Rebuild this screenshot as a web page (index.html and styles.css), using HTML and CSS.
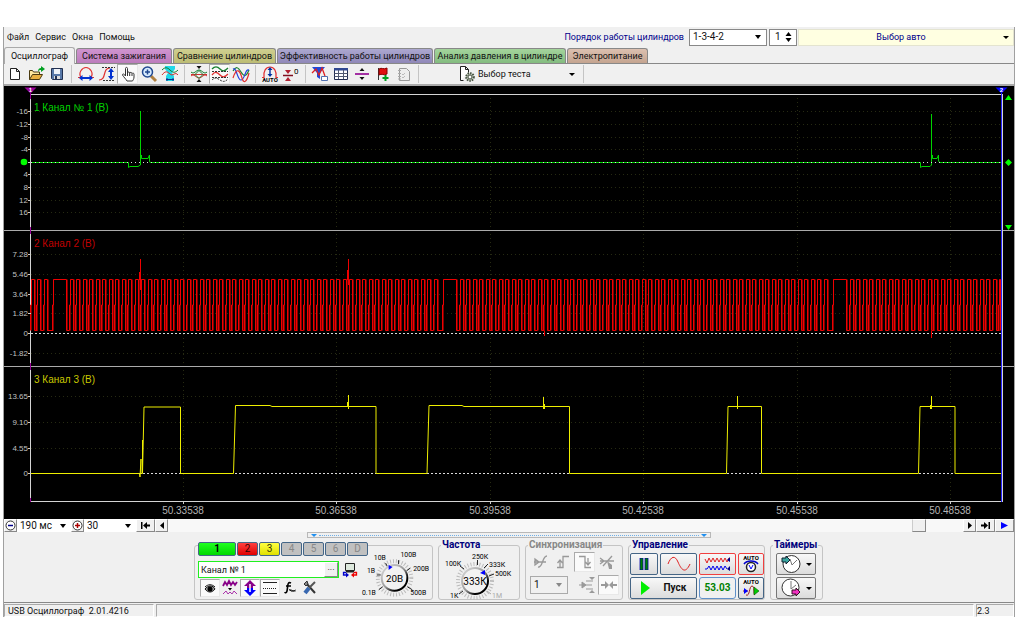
FILE: index.html
```html
<!DOCTYPE html>
<html lang="ru">
<head>
<meta charset="utf-8">
<title>USB Осциллограф</title>
<link rel="stylesheet" href="styles.css">
</head>
<body>
<div class="app">
  <header class="menubar">
    <nav class="menu">
      <button type="button">Файл</button><button type="button">Сервис</button><button type="button">Окна</button><button type="button">Помощь</button>
    </nav>
    <label class="order-label" for="order">Порядок работы цилиндров</label>
    <span class="combo order"><select id="order"><option>1-3-4-2</option></select></span>
    <span class="spin"><input type="text" value="1" aria-label="Цилиндр"><svg width="7" height="10" viewBox="0 0 7 10"><path d="M3.500 0 6.500 4h-6zM3.500 10 6.500 6h-6z" fill="#000"/></svg></span>
    <button type="button" class="car"><span>Выбор авто</span><i class="caret"></i></button>
  </header>

  <div class="tabs" role="tablist">
    <button type="button" role="tab" aria-selected="true" class="tab t-main">Осциллограф</button>
    <button type="button" role="tab" class="tab t-ignition">Система зажигания</button>
    <button type="button" role="tab" class="tab t-compare">Сравнение цилиндров</button>
    <button type="button" role="tab" class="tab t-effect">Эффективность работы цилиндров</button>
    <button type="button" role="tab" class="tab t-pressure">Анализ давления в цилиндре</button>
    <button type="button" role="tab" class="tab t-power">Электропитание</button>
  </div>

  <div class="toolbar">
    <button type="button" class="tool" aria-label="Новый"><svg viewBox="0 0 18 18"><path d="M4.500 3.500h6l3 3v8h-9zM10.500 3.500v3h3" fill="#fff" stroke="#222"/></svg></button>
    <button type="button" class="tool" aria-label="Открыть"><svg viewBox="0 0 18 18"><path d="M2.500 14.500v-9h3l1 1.500h6v3" fill="#ffe9a0" stroke="#4a3a10"/><path d="M2.500 14.500l3-5h10l-3 5z" fill="#e8b040" stroke="#4a3a10"/><path d="M11 7c0-3 1-4 3-4V1l4 3-4 3V5c-1 0-2 0-3 2z" fill="#00a020"/></svg></button>
    <button type="button" class="tool" aria-label="Сохранить"><svg viewBox="0 0 18 18"><path d="M3.500 3.500h11v11h-10l-1-1z" fill="#5878a8" stroke="#223050"/><path d="M6 4h6v5H6z" fill="#eef2f8"/><path d="M6 11h6v3H6z" fill="#ddd"/><path d="M7 11h2v3H7z" fill="#223050"/></svg></button>
    <i class="sep"></i>
    <button type="button" class="tool" aria-label="Растянуть по горизонтали"><svg viewBox="0 0 18 18"><path d="M1 12.500h3C1 8 5 2.500 9 2.500s8 5.500 5 10h3" fill="none" stroke="#e03030" stroke-width="1.200"/><path d="M2 13l3.500-3v2h7v-2L16 13l-3.500 3v-2h-7v2z" fill="#0030d0"/></svg></button>
    <button type="button" class="tool" aria-label="Растянуть по вертикали"><svg viewBox="0 0 18 18"><path d="M1 15c8 0 3-12 11-12" fill="none" stroke="#e03030" stroke-width="1.200"/><path d="M4 2.500h13M5 15.500h12" stroke="#333" stroke-dasharray="2 1"/><path d="M13 3l3 4h-2v4h2l-3 4-3-4h2V7h-2z" fill="#0030d0"/></svg></button>
    <button type="button" class="tool pressed" aria-label="Перемещение"><svg viewBox="0 0 18 18"><path d="M6.500 11V3.500c0-1.500 2-1.500 2 0V8c0-1.500 2.200-1.200 2.200 0 .3-1 2.300-.8 2.300.6.4-1 2-.6 2 .6V12c0 2-1 3-1.500 4H8c-1-2-3-3.500-4.500-6 0-1.500 1.500-1.500 3 1z" fill="#fff" stroke="#333"/><path d="M8.500 8v3M10.700 8v3M13 9v2" stroke="#333"/></svg></button>
    <button type="button" class="tool" aria-label="Лупа"><svg viewBox="0 0 18 18"><path d="M11 11l5 5" stroke="#b08040" stroke-width="3"/><circle cx="7.500" cy="7" r="5" fill="#d8ecff" stroke="#204890" stroke-width="1.500"/><path d="M5 7h5M7.500 4.500v5" stroke="#204890" stroke-width="1.500"/></svg></button>
    <button type="button" class="tool" aria-label="Фрагмент"><svg viewBox="0 0 18 18"><path d="M4 1h10v3l-3 4 2 3v5H5v-5l2-3-3-4z" fill="#20d8e8"/><path d="M1 5c3-3 5-3 8 0s5 3 8 0" fill="none" stroke="#188030"/><path d="M1 10c3-4 5-4 8-1s5-3 8 1" fill="none" stroke="#d03030"/><path d="M5 14.500h8M6 13v3M12 13v3" stroke="#103090"/></svg></button>
    <i class="sep"></i>
    <button type="button" class="tool" aria-label="Сжать лучи"><svg viewBox="0 0 18 18"><path d="M1 7c3 3 5-2 8-2s5 5 8 2" fill="none" stroke="#188030"/><path d="M1 11c3-3 5 2 8 2s5-5 8-2M1 9.500h16" fill="none" stroke="#d03030"/><path d="M9 4L6.500 1h5zM9 14l-2.500 3h5z" fill="#111"/><path d="M5 9.500l4-4 4 4-4 4z" fill="none" stroke="#188030"/></svg></button>
    <button type="button" class="tool pressed" aria-label="Лучи раздельно"><svg viewBox="0 0 18 18"><path d="M1 4c3-3 5-3 8 0s5 2 8-1" fill="none" stroke="#188030" stroke-width="1.300"/><path d="M1 10c3-4 5-3 8 0s5 2 8-1" fill="none" stroke="#e03030" stroke-width="1.300"/><path d="M1 15c3-3 5-2 8 0s5 2 8-1M1 6.500h16M1 12.500h16" fill="none" stroke="#333" stroke-dasharray="2 1"/></svg></button>
    <button type="button" class="tool" aria-label="Лучи совместно"><svg viewBox="0 0 18 18"><path d="M1 6c3-5 5-4 8 1s5 5 8-2" fill="none" stroke="#188030" stroke-width="1.200"/><path d="M1 4c4-2 4 11 8 11s4-12 8-10" fill="none" stroke="#2040e0" stroke-width="1.200"/><path d="M1 13c4-12 7-7 9 0s5 3 7-5" fill="none" stroke="#e03030" stroke-width="1.200"/></svg></button>
    <i class="sep"></i>
    <button type="button" class="tool" aria-label="Автомасштаб"><svg viewBox="0 0 18 18"><path d="M1 12.500h2C2 6 5 2 9 2s7 4 6 10.500h2" fill="none" stroke="#e03030" stroke-width="1.200"/><path d="M9 2l2.500 3H9.700v4h1.800L9 12 6.500 9h1.800V5H6.500z" fill="#0030a0"/><text x="9" y="17" text-anchor="middle" class="auto">AUTO</text></svg></button>
    <button type="button" class="tool" aria-label="Ноль"><svg viewBox="0 0 18 18"><path d="M1 10.500h10" stroke="#801020" stroke-width="1.500"/><path d="M6 9L3 5h6zM6 12l-3 4h6z" fill="#b02030"/><text x="12" y="9" class="zero">0</text></svg></button>
    <i class="sep"></i>
    <button type="button" class="tool" aria-label="Фильтр"><svg viewBox="0 0 18 18"><path d="M1 2h13L9 8v6l-3-2V8z" fill="#2048d8"/><path d="M1 8l4-4 3 6 3-7 3 8" fill="none" stroke="#e02020" stroke-width="1.300"/><path d="M10.500 11.500h6v4h-6z" fill="#fff" stroke="#5070b0"/></svg></button>
    <button type="button" class="tool" aria-label="Таблица"><svg viewBox="0 0 18 18"><path d="M2.500 3.500h13v11h-13z" fill="#fff" stroke="#222c50"/><path d="M2 3h14v2.500H2z" fill="#304890"/><path d="M2.500 8.500h13M2.500 11.500h13M6.500 5v9M11.500 5v9" stroke="#505870"/></svg></button>
    <button type="button" class="tool" aria-label="Линейка"><svg viewBox="0 0 18 18"><path d="M2 9h14" stroke="#900090" stroke-width="1.600"/><path d="M9 3l2.500 3h-5zM9 15l2.500-3h-5z" fill="#111"/></svg></button>
    <button type="button" class="tool" aria-label="Добавить метку"><svg viewBox="0 0 18 18"><path d="M4.500 3v12" stroke="#333"/><path d="M5 4c3-2 4 1 8-1v6c-4 2-5-1-8 1z" fill="#e01010" stroke="#800"/><path d="M11.500 10v6M8.500 13h6" stroke="#00a020" stroke-width="2"/></svg></button>
    <button type="button" class="tool" aria-label="Отчёт"><svg viewBox="0 0 18 18"><path d="M4.500 3.500h7l3 3v9h-10z" fill="#eee" stroke="#999"/><path d="M3 5.500h3M3 8.500h3M3 11.500h3M3 14h3" stroke="#aaa"/><path d="M7 9l1 1 2-2M7 12l1 1 2-2" fill="none" stroke="#bbb"/></svg></button>
    <i class="sep"></i>
    <button type="button" class="test-select"><svg width="18" height="18" viewBox="0 0 18 18"><path d="M3.500 15.500v-14h5l3 3v3M8.500 1.500v3h3M3.500 15.500h3" fill="#fff" stroke="#222"/><circle cx="13" cy="12" r="3.800" fill="#c8d0c0" stroke="#445040" stroke-width="2" stroke-dasharray="1.500 1"/><circle cx="13" cy="12" r="2" fill="#fff" stroke="#445040"/></svg><span>Выбор теста</span><i class="caret"></i></button>
    <i class="sep"></i>
  </div>

  <main class="scope">
    <svg id="chart" class="chart" viewBox="4 86 1010 433" role="img" aria-label="Осциллограммы">
      <g id="grid" class="grid"></g>
      <g class="frame">
        <path d="M30 94.500H1002M30 501.500H1002"/>
        <path class="divider" d="M4 230.500H1014M4 366.500H1014"/>
        <path d="M30.500 94V227M30.500 234V363M30.500 370V498M1002.500 94V502"/>
      </g>
      <path class="cursor-a" d="M30.500 87V99M30.500 227V234M30.500 363V370M30.500 498V502"/>
      <g id="zeros" class="zeros"></g>
      <g id="crank"></g>
      <path class="red" d="M140.500 259V290M139.500 272V280M348.500 259V285M347.500 270V280M931.500 331V338M544.500 331V336"/>
      <path class="yellow" d="M31 473.500H139.500L140 477 141 459V473.500H142.500L144 407H180.500V473.500H233.500L235.500 405.500H270L272 406.500H376V473.500H427L429 405.500H462L464 406.500H569.500V473.500H726.500L728 406.500H761.500V473.500H918.500L920 406.500H955V473.500H1001"/>
      <path class="yellow" d="M348.500 395V409M347.500 402V407M543.500 397V409M544.500 404V409M737.500 396V409M931.500 396V409M930.500 405V409M142.500 440V473"/>
      <path class="green" d="M31 162.500H128.500V167.500L130 166.500H138L140.500 165V111M140.500 136V158M141.500 155V158.500H148L149.500 155V161L150 162.500H920.500V167.500L922 166.500H930L931.500 165V114M931.500 136V158M932.500 155V158.500H937L938.500 155V161L940 162.500H1001"/>
      <path class="white-dash" d="M31 162.500H1001"/>
      <path class="cursor-b" d="M1001.500 92V502"/>
      <path d="M24.500 87.500h12l-6 6z" fill="#909"/>
      <path d="M995.500 87.500h12l-6 6z" fill="#00f"/>
      <text class="flag" x="30.500" y="92">1</text>
      <text class="flag" x="1001.500" y="92">2</text>
      <circle cx="24" cy="162" r="3.300" fill="#0f0"/>
      <path d="M1008.500 95l3.500 5h-7zM1008.500 159l3.500 3.500-3.500 3.500-3.500-3.500zM1005 225h7l-3.500 5z" fill="#0f0"/>
      <text class="name n1" x="34" y="111">1 Канал № 1 (В)</text>
      <text class="name n2" x="34" y="247">2 Канал 2 (В)</text>
      <text class="name n3" x="34" y="383">3 Канал 3 (В)</text>
      <g id="scales"></g>
    </svg>
  </main>

  <div class="timebar">
    <button type="button" class="flat" aria-label="Уменьшить"><svg width="11" height="11" viewBox="0 0 11 11"><circle cx="5.500" cy="5.500" r="4.500" fill="#fff" stroke="#333"/><path d="M3 5.500h5" stroke="#008" stroke-width="1.500"/></svg></button>
    <span class="combo time"><select aria-label="Развёртка"><option>190 мс</option></select></span>
    <button type="button" class="flat" aria-label="Увеличить"><svg width="11" height="11" viewBox="0 0 11 11"><circle cx="5.500" cy="5.500" r="4.500" fill="#fff" stroke="#333"/><path d="M3 5.500h5M5.500 3v5" stroke="#a00" stroke-width="1.500"/></svg></button>
    <span class="combo count"><select aria-label="Масштаб"><option>30</option></select></span>
    <button type="button" class="flat wide" aria-label="В начало"><svg width="9" height="7" viewBox="0 0 9 7"><path d="M0 0h1.500v7H0zM6 0v7L2 3.500zM6 2.500h3v2H6z"/></svg></button>
    <button type="button" class="flat" aria-label="Назад"><svg width="4" height="7" viewBox="0 0 4 7"><path d="M4 0v7L0 3.500z"/></svg></button>
    <div class="track"><i class="thumb"></i></div>
    <button type="button" class="flat" aria-label="Вперёд"><svg width="4" height="7" viewBox="0 0 4 7"><path d="M0 0v7l4-3.500z"/></svg></button>
    <button type="button" class="flat wide" aria-label="В конец"><svg width="9" height="7" viewBox="0 0 9 7"><path d="M7.500 0H9v7H7.500zM3 0v7l4-3.500zM0 2.500h3v2H0z"/></svg></button>
    <button type="button" class="flat wide" aria-label="Воспроизвести"><svg width="7" height="7" viewBox="0 0 7 7"><path d="M0 0v7l7-3.500z" fill="#00f"/></svg></button>
  </div>

  <div class="splitter"><i></i><span></span><i></i></div>

  <section class="controls">
    <fieldset class="box channel">
      <div class="channel-side">
        <div class="channel-tabs">
          <button type="button" class="ch c1">1</button><button type="button" class="ch c2">2</button><button type="button" class="ch c3">3</button><button type="button" class="ch" disabled>4</button><button type="button" class="ch" disabled>5</button><button type="button" class="ch" disabled>6</button><button type="button" class="ch" disabled>D</button>
        </div>
        <div class="channel-name">
          <span class="name-field"><input type="text" value="Канал № 1" aria-label="Имя канала"><button type="button" aria-label="Выбрать">···</button></span>
          <svg width="16" height="16" viewBox="0 0 16 16"><path d="M3.500 1.500h9v7h-9z" fill="#dde8dd" stroke="#222"/><path d="M4 9h8v1.500H4z" fill="#222"/><path d="M4 10.500H1.500V13H4" fill="none" stroke="#00c" stroke-width="1.300"/><path d="M4 10.500v5L7 13z" fill="#00c"/><path d="M12 10.500h2.500V13H12" fill="none" stroke="#e00" stroke-width="1.300"/><path d="M12 10.500v5L9 13z" fill="#e00"/></svg>
        </div>
        <div class="channel-tools">
          <button type="button" class="tool pressed" aria-label="Видимость"><svg viewBox="0 0 18 18"><path d="M4 10c3-4 8-4 10 0-3 4-7 4-10 0z" fill="#999" stroke="#111"/><circle cx="9" cy="10" r="2.500" fill="#000"/><path d="M4 8c3-3 7-3 10 0" fill="none" stroke="#111"/></svg></button>
          <button type="button" class="tool" aria-label="Фильтр канала"><svg viewBox="0 0 18 18"><path d="M2 7l2-4 2 3 2-4 2 4 2-3 2 3 2-3" fill="none" stroke="#808" stroke-width="1.800"/><path d="M7 9h4l-2 2.500z"/><path d="M2 15l3-3 2 3 2-2 2 2 2-3 3 3" fill="none" stroke="#a3a"/></svg></button>
          <button type="button" class="tool pressed" aria-label="Инверсия"><svg viewBox="0 0 18 18"><path d="M9 1l6 6h-3v3H6V7H3z" fill="#808"/><path d="M9 17l6-6h-3V9H6v2H3z" fill="#00f"/><path d="M9 5v8" stroke="#fff" stroke-width="1.500"/></svg></button>
          <button type="button" class="tool pressed" aria-label="Уровни"><svg viewBox="0 0 18 18"><path d="M2 3.500h14M2 14.500h14" stroke="#222"/><path d="M2 9.500h14" stroke="#222" stroke-dasharray="1 1"/></svg></button>
          <button type="button" class="tool" aria-label="Функция"><svg viewBox="0 0 18 18"><path d="M10 4c-4-2-3 4-4 8-.5 2-2 2-2 1M5 7h5" fill="none" stroke="#000" stroke-width="1.600"/><path d="M8.500 12c2-3 3 2 6-1M8.500 10c2 4 3 1 6 2" fill="none" stroke="#000"/></svg></button>
          <button type="button" class="tool" aria-label="Настройки"><svg viewBox="0 0 18 18"><path d="M5 4l9 10" stroke="#333" stroke-width="2"/><path d="M3 5l3-3 1 3-2 2z" fill="#888" stroke="#333"/><path d="M14 3L8 9" stroke="#555" stroke-width="2"/><path d="M8 9l-4 5" stroke="#3868b0" stroke-width="4"/></svg></button>
        </div>
      </div>
      <svg class="knob" width="72" height="54" viewBox="360 548 72 54" role="img" aria-label="Предел 20В">
        <defs><linearGradient id="dial" x1="0" y1="0" x2="1" y2="1"><stop offset="0" stop-color="#ddd"/><stop offset=".5" stop-color="#999"/><stop offset=".75" stop-color="#000"/></linearGradient></defs>
        <circle cx="394" cy="580" r="17" class="ticks"/>
        <path class="lead" d="M378 592l4-3M376 577h4M385 565l2 4M398 562v4M410 570l-4 3M412 592l-5-3"/>
        <circle cx="394" cy="580" r="13" fill="#f2f2f2" stroke="url(#dial)" stroke-width="2"/>
        <path d="M388 567l4 2-4 3z" fill="#00f"/>
        <g class="tiny"><text x="361" y="597">0.1В</text><text x="366" y="575">1В</text><text x="373" y="562">10В</text><text x="400" y="559">100В</text><text x="413" y="573">200В</text><text x="410" y="597">500В</text></g>
        <text x="394" y="584" class="dial-value">20В</text>
      </svg>
    </fieldset>

    <fieldset class="box freq"><legend>Частота</legend>
      <svg class="knob" width="76" height="52" viewBox="440 550 76 52" role="img" aria-label="Частота 333К">
        <circle cx="476" cy="580" r="17" class="ticks"/>
        <path class="lead" d="M460 593l4-3M461 565l4 3M478.500 559v5M489 563l-4 4M495 573l-5 2"/><path d="M492 593l-4-3" stroke="#aaa"/>
        <circle cx="476" cy="580" r="13" fill="#f2f2f2" stroke="url(#dial)" stroke-width="2"/>
        <path d="M481 572l5-3v5z" fill="#00f"/>
        <g class="tiny"><text x="451" y="597">1К</text><text x="446" y="565">100К</text><text x="473" y="558">250К</text><text x="490" y="566">333К</text><text x="496" y="575">500К</text><text x="493" y="597" fill="#aaa">1М</text></g>
        <text x="476" y="584" class="dial-value">333К</text>
      </svg>
    </fieldset>

    <fieldset class="box sync" disabled><legend>Синхронизация</legend>
      <div class="row">
        <button type="button" class="tool" aria-label="Уровень"><svg viewBox="0 0 18 18"><path d="M2 9h12M3 6l4 3-4 3zM6 14c5 1 4-11 9-11" fill="none" stroke="#999" stroke-width="1.300"/></svg></button>
        <button type="button" class="tool" aria-label="Фронт"><svg viewBox="0 0 18 18"><path d="M3 14.500h6v-11h6M6 14V8M3.500 10L6 7l2.500 3" fill="none" stroke="#999" stroke-width="1.300"/></svg></button>
        <button type="button" class="tool pressed" aria-label="Спад"><svg viewBox="0 0 18 18"><path d="M3 3.500h6v11h6M12 5v6M9.500 9l2.500 3 2.500-3" fill="none" stroke="#999" stroke-width="1.300"/></svg></button>
        <button type="button" class="tool" aria-label="Импульс"><svg viewBox="0 0 18 18"><path d="M2 8h14M2 5l4 3-4 3M5 13L14 3" fill="none" stroke="#999" stroke-width="1.300"/><path d="M9 8l5 4v4h-3z" fill="#999"/></svg></button>
      </div>
      <div class="row">
        <span class="combo sync-ch"><select aria-label="Канал синхронизации"><option>1</option></select></span>
        <button type="button" class="tool" aria-label="Порог"><svg viewBox="0 0 18 18"><path d="M1 9h6M4 6l4 3-4 3zM8 5h7M8 13h7M8 9h6" stroke="#999" fill="#999"/><path d="M11 1h6l-3 3zM11 17h6l-3-3z" fill="#999"/></svg></button>
        <button type="button" class="tool pressed" aria-label="Сжать"><svg viewBox="0 0 18 18"><path d="M1 9h6M11 9h6" stroke="#999" stroke-width="2"/><path d="M5 5l4 4-4 4zM13 5L9 9l4 4z" fill="#999"/></svg></button>
      </div>
    </fieldset>

    <fieldset class="box run"><legend>Управление</legend>
      <div class="run-grid">
        <div class="pair">
          <button type="button" class="big pause" aria-label="Пауза"><svg width="10" height="12" viewBox="0 0 10 12"><path d="M1 0h3v12H1zM6 0h3v12H6z" fill="#008000" stroke="#00a" stroke-width=".8"/></svg></button>
          <button type="button" class="big sine" aria-label="Синус"><svg width="24" height="16" viewBox="0 0 24 16"><path d="M1 8C4 0 8-1 11 6s7 13 12 2" fill="none" stroke="#e02020"/></svg></button>
        </div>
        <button type="button" class="big hot" aria-label="Два луча"><svg width="28" height="18" viewBox="0 0 28 18"><path d="M1 4l2 4 2-5 2 4 2-4 2 4 2-4 2 4 2-4 2 4 2-4 2 4 2-4" fill="none" stroke="#e02020"/><path d="M1 14h2l2-3 2 4 2-4 2 4 2-4 2 4 2-4 2 4 2-4 2 3" fill="none" stroke="#00e"/><path d="M23 5l3-3v5zM23 14l3-3v5z" fill="#008"/></svg></button>
        <button type="button" class="big hot" aria-label="Автодиапазон"><svg width="20" height="20" viewBox="0 0 20 20"><text x="10" y="6" text-anchor="middle" class="auto">AUTO</text><path d="M3 10c3-4 11-4 14 0" fill="none" stroke="#00c" stroke-width="1.500"/><circle cx="10" cy="13" r="4.500" fill="#fff" stroke="#222" stroke-width="1.500"/><path d="M8 11l2 4 2-4" fill="none" stroke="#00f"/></svg></button>
        <button type="button" class="big start"><svg width="9" height="14" viewBox="0 0 9 14"><path d="M0 0v14l9-7z" fill="#0e0"/></svg><span>Пуск</span></button>
        <output class="big rate">53.03</output>
        <button type="button" class="big" aria-label="Автозапуск"><svg width="20" height="20" viewBox="0 0 20 20"><text x="10" y="6" text-anchor="middle" class="auto">AUTO</text><path d="M2 13h5M5 17c4 2 3-9 6-9s1 8 3 9" fill="none" stroke="#a02020"/><path d="M3 10v6l4-3z" fill="#00f"/><path d="M13 9v8l5-4z" fill="#0c0" stroke="#050" stroke-width=".6"/></svg></button>
      </div>
    </fieldset>

    <fieldset class="box timers"><legend>Таймеры</legend>
      <button type="button" class="big gray" aria-label="Таймер начала"><svg width="20" height="20" viewBox="0 0 20 20"><circle cx="10.500" cy="10" r="8.500" fill="#fff" stroke="#333"/><path d="M9 5l2 6 5-5" fill="none" stroke="#777"/><path d="M1 4h4V2l4 4-4 4V8H1z" fill="#3aa6a0" stroke="#123"/></svg><i class="caret"></i></button>
      <button type="button" class="big gray" aria-label="Таймер конца"><svg width="20" height="20" viewBox="0 0 20 20"><circle cx="9.500" cy="9.500" r="8.500" fill="#fff" stroke="#333"/><path d="M10 3v8l5-4" fill="none" stroke="#777"/><path d="M11 12h4v-2l4 4-4 4v-2h-4z" fill="#f030c0" stroke="#312"/></svg><i class="caret"></i></button>
    </fieldset>
  </section>

  <footer class="status"><span class="product">USB Осциллограф&nbsp; 2.01.4216</span><span class="message"></span><span class="version">2.3</span></footer>
</div>
<script src="chart.js"></script>
</body>
</html>
```
FILE: styles.css
```css
* { box-sizing: border-box; }
body { margin: 0; padding: 27px 9px 0 3px; background: #fff; font: 9px/12px Roboto, "Liberation Sans", Arial, sans-serif; color: #111; }
button, input, select, output { font: inherit; color: inherit; margin: 0; padding: 0; border: 0; background: none; border-radius: 0; }
select { appearance: none; width: 100%; height: 100%; padding-left: 3px; opacity: 1; }
.app { background: #f0f0f0; border-left: 1px solid #a0a0a0; border-right: 1px solid #a0a0a0; }

.menubar { display: flex; align-items: center; height: 20px; }
.menu { display: flex; gap: 6px; flex: 1; padding-left: 3px; }
.order-label { color: #00008b; margin-right: 5px; }
.combo { position: relative; background: #fff; }
.combo::after { content: ""; position: absolute; right: 5px; top: 50%; margin-top: -2px; border: 3px solid transparent; border-top: 4px solid #000; border-bottom: 0; pointer-events: none; }
.order { width: 78px; height: 17px; border: 1px solid #888; font-size: 10px; }
.spin { display: flex; align-items: center; width: 28px; height: 17px; margin: 0 1px 0 2px; padding-right: 4px; border: 1px solid #888; background: #fff; font-size: 10px; }
.spin input { flex: 1; min-width: 0; padding-left: 5px; }
.car { display: flex; align-items: center; width: 216px; height: 17px; padding-right: 4px; background: #ffffe1; color: #00008b; border: 1px solid #e4e4d0; }
.car span { flex: 1; }
.caret { border: 3px solid transparent; border-top: 3px solid #000; border-bottom: 0; }

.tabs { display: flex; align-items: flex-end; gap: 1px; height: 17px; border-bottom: 1px solid #888; }
.tab { height: 15px; border: 1px solid #888; border-bottom: 0; border-radius: 3px 3px 0 0; white-space: nowrap; }
.t-main { height: 17px; width: 71px; background: #f0f0f0; border-color: #aaa; margin-bottom: -1px; }
.t-ignition { width: 96px; background: linear-gradient(#d094d0, #bc7cbc); }
.t-compare { width: 103px; background: linear-gradient(#cfcf90, #bcbc74); }
.t-effect { width: 156px; background: linear-gradient(#aca8d0, #9088b8); }
.t-pressure { width: 132px; background: linear-gradient(#a4d49c, #84bc80); }
.t-power { width: 81px; background: linear-gradient(#dcc0b0, #c4a490); }

.toolbar { display: flex; align-items: center; height: 22px; border-bottom: 2px solid #aaa; }
.tool { display: flex; align-items: center; justify-content: center; width: 21px; height: 20px; border: 1px solid transparent; }
.tool svg { flex: none; width: 18px; height: 18px; }
.pressed { background: #fafafa; border-color: #aaa #e8e8e8 #e8e8e8 #aaa; }
.sep { width: 8px; height: 18px; background: linear-gradient(#c4c4c4, #c4c4c4) center / 1px 100% no-repeat; }
.test-select { display: flex; align-items: center; width: 157px; padding: 0 4px 0 35px; text-align: left; }
.test-select span { flex: 1; padding-left: 3px; }

.scope { background: #000; }
.chart { display: block; width: 100%; height: auto; font-family: "Liberation Sans", Arial, sans-serif; }
.grid { stroke: #262a12; stroke-dasharray: 1 3; }
.frame { stroke: #d4d4d4; fill: none; }
.divider { stroke: #aaa; }
.cursor-a { stroke: #909; }
.cursor-b { stroke: #22f; }
.zeros, .white-dash { stroke: #ddd; stroke-dasharray: 2 2; }
.white-dash { stroke-dasharray: 1 3; }
.red { stroke: #f00000; fill: none; }
.fall { stroke: #800000; fill: none; }
.yellow { stroke: #ee0; fill: none; }
.green { stroke: #00d400; fill: none; }
.name { font-size: 10px; }
.n1 { fill: #00d400; }
.n2 { fill: #c00000; }
.n3 { fill: #c8c800; }
.flag { font-size: 6px; font-weight: bold; fill: #fff; text-anchor: middle; }
.y-label { font-size: 8px; fill: #c0c0c0; text-anchor: end; }
.x-label { font-size: 10px; fill: #b4b4b4; text-anchor: middle; }

.timebar { display: flex; height: 13px; background: #fff; font-size: 10px; }
.flat { display: flex; align-items: center; justify-content: center; width: 13px; height: 13px; background: #f0f0f0; border: 1px solid; border-color: #fff #888 #888 #fff; }
.flat svg { flex: none; }
.wide { width: 19px; }
.time { width: 54px; }
.count { width: 52px; }
.track { flex: 1; display: flex; justify-content: flex-end; padding-right: 37px; background: #f8f8f8; }
.thumb { width: 14px; background: #f0f0f0; border: 1px solid; border-color: #fff #888 #888 #ccc; }
.splitter { display: flex; align-items: center; width: 404px; height: 6px; margin-left: 303px; padding: 0 3px; gap: 2px; border: 1px solid #b8b8b8; }
.splitter i { border: 3px solid transparent; border-top-color: #2090f0; border-bottom: 0; }
.splitter span { flex: 1; border-top: 1px dotted #70b0e8; }

.controls { display: flex; align-items: stretch; gap: 5px; height: 65px; padding: 1px 0 2px 190px; border-bottom: 1px solid #888; }
.box { min-width: 0; margin: 0; padding: 0; border: 1px solid #c4c4c4; border-radius: 3px; }
.box legend { height: 12px; margin-left: 2px; padding: 0 1px; font-weight: bold; font-size: 10px; line-height: 12px; color: #00007c; }
.channel { display: flex; width: 239px; margin-top: 6px; }
.channel-side { display: flex; flex-direction: column; width: 166px; padding-left: 3px; margin-top: -4px; }
.channel-tabs { display: flex; gap: 1px; background: #f0f0f0; }
.ch { flex: 0 0 21px; height: 14px; border: 1px solid #446688; border-radius: 2px; background: #c0c0c0; font-size: 10px; }
.ch:disabled { color: #888; }
.c1 { flex-basis: 38px; background: linear-gradient(#20ff20, #00d800); color: #000; font-weight: bold; }
.c2 { background: linear-gradient(#ff4040, #e00000); color: #300; }
.c3 { background: linear-gradient(#ffff40, #e0e000); color: #330; }
.channel-name { display: flex; align-items: center; gap: 3px; margin-top: 5px; }
.name-field { display: flex; flex: 0 0 141px; height: 17px; border: 1px solid #20f020; background: #fff; }
.name-field input { flex: 1; min-width: 0; padding-left: 2px; }
.name-field button { width: 14px; background: #f0f0f0; border: 1px solid; border-color: #fff #888 #888 #fff; line-height: 10px; }
.channel-tools { display: flex; margin-top: 1px; padding-left: 2px; }
.channel-tools .tool { width: 20px; height: 18px; }
.knob { display: block; }
.ticks { fill: none; stroke: #bbb; stroke-width: 4; stroke-dasharray: 1 2; }
.lead { stroke: #222; }
.tiny { font-size: 7px; }
.auto { font-weight: bold; font-size: 6px; }
.zero { font-size: 8px; }
.dial-value { font-size: 10px; text-anchor: middle; }

.freq { width: 82px; }
.sync { width: 98px; }
.box.sync legend { color: #888; }
.row { display: flex; align-items: center; gap: 1px; height: 21px; padding-left: 4px; }
.row + .row { margin-top: 2px; }
.sync-ch { width: 38px; height: 18px; margin-right: 7px; border: 1px solid #aaa; background: #f0f0f0; font-size: 10px; }
.sync-ch::after { border-top-color: #888; }
.row .tool { height: 20px; }

.run { width: 137px; }
.run-grid { display: grid; grid-template-columns: 67px 37px 26px; gap: 2px; padding: 2px 1px 0; }
.pair { display: flex; gap: 2px; }
.big { display: flex; align-items: center; justify-content: center; height: 22px; border: 1px solid #456585; border-radius: 2px; background: linear-gradient(#f8f8f8, #dcdcdc); }
.pause { flex: 0 0 28px; }
.sine { flex: 1; }
.hot { border-color: #f04040; }
.start { gap: 14px; font-size: 10px; font-weight: bold; }
.rate { border-color: #6090c8; border-radius: 3px; background: #f0f0f0; color: #008000; font-size: 10px; font-weight: bold; }
.timers { width: 53px; }
.gray { width: 40px; margin: 2px 0 0 5px; gap: 5px; border-color: #777; }

.status { display: flex; gap: 2px; height: 14px; padding-top: 1px; }
.status span { border: 1px solid; border-color: #aaa #fff #fff #aaa; line-height: 12px; }
.product { width: 150px; padding-left: 3px; white-space: nowrap; }
.message { flex: 1; }
.version { width: 38px; }
```
FILE: chart.js
```javascript
const NS = "http://www.w3.org/2000/svg";
const add = (parent, tag, attrs, text) => {
  const el = document.createElementNS(NS, tag);
  for (const key in attrs) el.setAttribute(key, attrs[key]);
  if (text) el.textContent = text;
  document.getElementById(parent).appendChild(el);
};

const yScale = [
  [111, "-16"], [124, "-12"], [137, "-8"], [149, "-4"], [162, ""], [174, "4"], [187, "8"], [200, "12"], [212, "16"],
  [254, "7.28"], [274, "5.46"], [294, "3.64"], [313, "1.82"], [333, "0"], [353, "-1.82"],
  [396, "13.65"], [422, "9.10"], [448, "4.55"], [473, "0"]
];
const xScale = [[183, "50.33538"], [336, "50.36538"], [490, "50.39538"], [643, "50.42538"], [797, "50.45538"], [950, "50.48538"]];

for (const [y, label] of yScale) {
  add("grid", "path", { d: `M31 ${y}.5H1001` });
  add("scales", "path", { d: `M28 ${y}.5H31`, stroke: "#ccc" });
  if (label) add("scales", "text", { x: 28, y: y + 3, class: "y-label" }, label);
}
for (const [x, label] of xScale) {
  add("grid", "path", { d: `M${x}.5 98V500` });
  add("scales", "path", { d: `M${x}.5 502V504`, stroke: "#ccc" });
  add("scales", "text", { x, y: 514, class: "x-label" }, label);
}
add("zeros", "path", { d: "M31 333.5H1001M31 473.5H1001" });

// Crankshaft sensor: 60-2 toothed wheel, one long tooth per revolution.
const HIGH = 279.5, LOW = 330.5, PERIOD = 6.5;
let bright = "", dark = "";
const pulse = (start, end) => {
  const a = Math.max(Math.floor(start), 31) + 0.5;
  const b = Math.min(Math.floor(end), 1000) + 0.5;
  if (b <= a) return;
  bright += `M${a - 1} ${LOW}V305H${a}V${HIGH}H${b}V${LOW}`;
  dark += `M${a} ${LOW}V${HIGH}M${b + 1} ${HIGH}V${LOW}`;
  if (b < 998) bright += `H${b + 3}`;
};
for (let gap = 53.3 - 390; gap < 1002; gap += 390) {
  if (gap > 0) pulse(gap, gap + 13.4);
  for (let i = 0; i < 57; i++) {
    const start = gap + 16.7 + i * PERIOD;
    if (start + 3 > 31 && start < 1001) pulse(start, start + 3.2);
  }
  bright += `M${Math.max(31, gap - 6)} ${LOW}H${Math.max(31, Math.min(gap, 1001))}`;
}
add("crank", "path", { d: dark, class: "fall" });
add("crank", "path", { d: bright, class: "red" });
```
